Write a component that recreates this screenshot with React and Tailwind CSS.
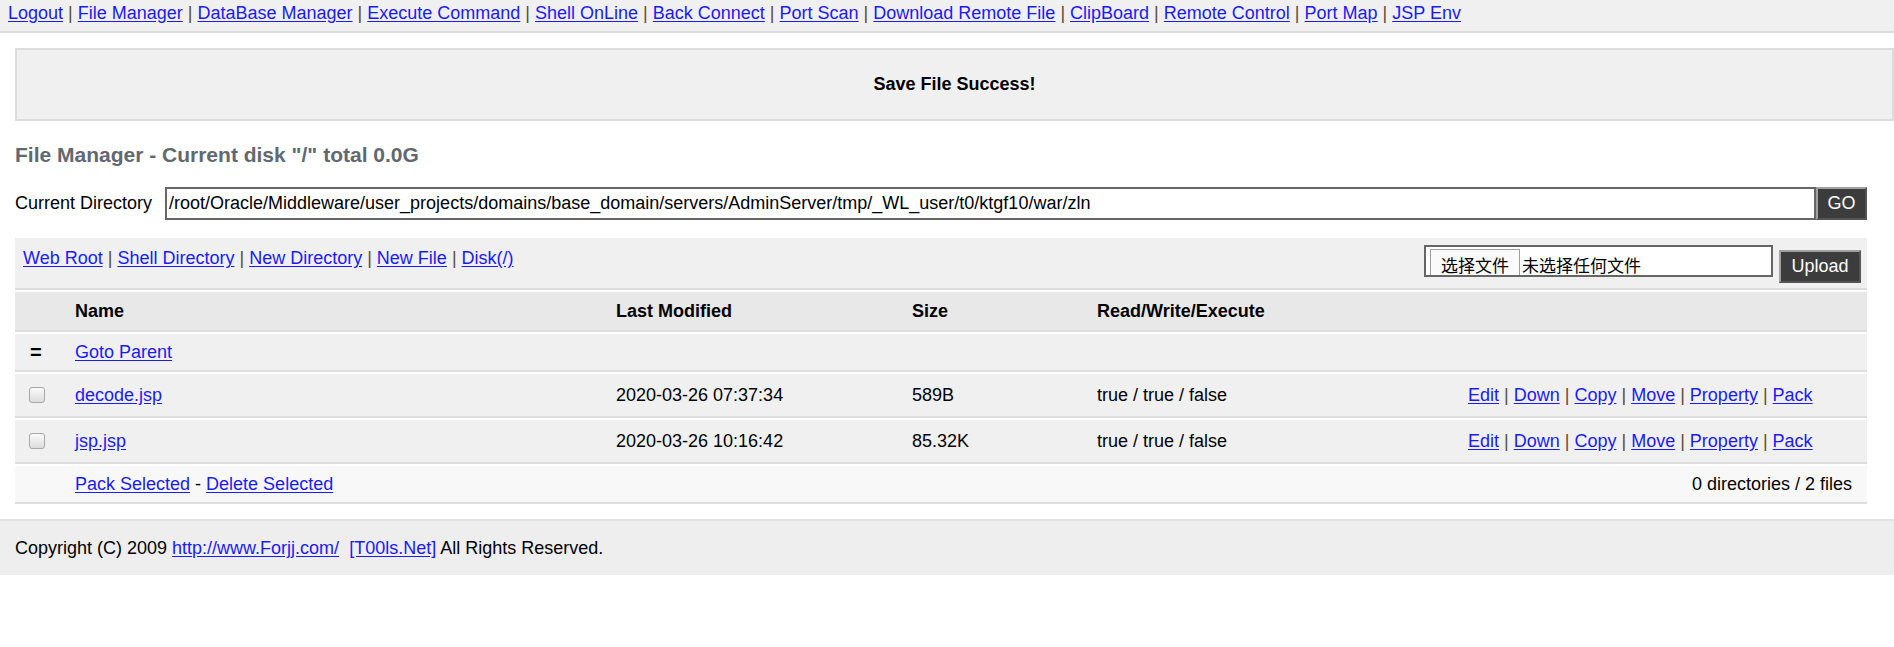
import React from 'react';

const navItems = [
  'Logout',
  'File Manager',
  'DataBase Manager',
  'Execute Command',
  'Shell OnLine',
  'Back Connect',
  'Port Scan',
  'Download Remote File',
  'ClipBoard',
  'Remote Control',
  'Port Map',
  'JSP Env',
];

const toolItems = ['Web Root', 'Shell Directory', 'New Directory', 'New File', 'Disk(/)'];

const actions = ['Edit', 'Down', 'Copy', 'Move', 'Property', 'Pack'];

const files = [
  { name: 'decode.jsp', modified: '2020-03-26 07:37:34', size: '589B', rwe: 'true / true / false' },
  { name: 'jsp.jsp', modified: '2020-03-26 10:16:42', size: '85.32K', rwe: 'true / true / false' },
];

const cols = 'grid grid-cols-[60px_541px_296px_185px_371px_1fr] items-center';

function Link({ children }) {
  return <a href="#" className="text-[#1a1aff] underline underline-offset-2">{children}</a>;
}

function Piped({ items }) {
  return (
    <>
      {items.map((item, i) => (
        <React.Fragment key={item}>
          {i > 0 && <span className="text-[#5a4a3a]"> | </span>}
          <Link>{item}</Link>
        </React.Fragment>
      ))}
    </>
  );
}

function Checkbox() {
  return (
    <div className="w-4 h-4 rounded-[3px] border border-[#a8a8a8] bg-linear-to-b from-[#fafafa] to-[#dcdcdc]" />
  );
}

export default function App() {
  return (
    <div className="min-h-[647px] bg-white text-black text-[18px] leading-[21px] font-['Liberation_Sans',Arial,'Noto_Sans_CJK_SC',sans-serif] overflow-hidden">
      <div className="h-[33px] bg-[#f0f0f0] border-b-2 border-[#dddddd] pl-[8px] pt-[3px] whitespace-nowrap">
        <Piped items={navItems} />
      </div>

      <div className="ml-[15px] mt-[15px] h-[73px] border-2 border-[#dcdcdc] bg-[#f0f0f0] flex items-center justify-center font-bold">
        Save File Success!
      </div>

      <div className="w-[1852px] ml-[15px]">
        <h2 className="mt-[22px] text-[21px] leading-[24px] font-bold text-[#626870]">
          File Manager - Current disk &quot;/&quot; total 0.0G
        </h2>

        <div className="mt-[20px] flex items-center">
          <span className="w-[150px]">Current Directory</span>
          <div className="flex-1 h-[33px] border-2 border-[#666666] bg-white flex items-center pl-[2px]">
            /root/Oracle/Middleware/user_projects/domains/base_domain/servers/AdminServer/tmp/_WL_user/t0/ktgf10/war/zln
          </div>
          <button className="w-[51px] h-[33px] bg-[#3c3c3c] text-white border-2 border-t-[#a0a0a0] border-l-[#a0a0a0] border-r-[#555555] border-b-[#555555]">
            GO
          </button>
        </div>

        <div className="mt-[18px] flex flex-col gap-[2px]">
          <div className="h-[52px] bg-[#f0f0f0] border-b-2 border-[#dddddd] flex items-start justify-between pl-[8px] pr-[6px] pt-[7px]">
            <div className="pt-[3px] whitespace-nowrap">
              <Piped items={toolItems} />
            </div>
            <div className="flex items-start gap-[6px]">
              <div className="w-[349px] h-[32px] border-2 border-[#666666] bg-white flex items-end overflow-hidden pl-[4px]">
                <div className="h-[26px] pt-[4px] px-[10px] bg-[#fafafa] border-t border-l border-r border-[#a0a0a0] flex items-center font-['Noto_Sans_CJK_SC',sans-serif] text-[17px]">
                  选择文件
                </div>
                <div className="h-[26px] pt-[4px] pl-[2px] flex items-center font-['Noto_Sans_CJK_SC',sans-serif] text-[17px]">
                  未选择任何文件
                </div>
              </div>
              <button className="mt-[5px] w-[82px] h-[33px] bg-[#3c3c3c] text-white border-2 border-t-[#a0a0a0] border-l-[#a0a0a0] border-r-[#555555] border-b-[#555555]">
                Upload
              </button>
            </div>
          </div>

          <div className={`${cols} h-[40px] bg-[#e8e8e8] border-b-2 border-[#dddddd] font-bold`}>
            <span />
            <span>Name</span>
            <span>Last Modified</span>
            <span>Size</span>
            <span>Read/Write/Execute</span>
            <span />
          </div>

          <div className={`${cols} h-[38px] bg-[#f0f0f0] border-b-2 border-[#dddddd]`}>
            <span className="pl-[15px] font-bold text-[20px]">=</span>
            <span><Link>Goto Parent</Link></span>
          </div>

          {files.map((f) => (
            <div key={f.name} className={`${cols} h-[44px] bg-[#f0f0f0] border-b-2 border-[#dddddd]`}>
              <span className="pl-[14px]"><Checkbox /></span>
              <span><Link>{f.name}</Link></span>
              <span>{f.modified}</span>
              <span>{f.size}</span>
              <span>{f.rwe}</span>
              <span className="whitespace-nowrap"><Piped items={actions} /></span>
            </div>
          ))}

          <div className="h-[38px] bg-[#f8f8f8] border-b-2 border-[#dddddd] flex items-center justify-between pl-[60px] pr-[15px]">
            <span>
              <Link>Pack Selected</Link> - <Link>Delete Selected</Link>
            </span>
            <span>0 directories / 2 files</span>
          </div>
        </div>
      </div>

      <div className="mt-[15px] h-[56px] bg-[#eeeeee] border-t-2 border-[#e2e2e2] flex items-center pl-[15px]">
        <span>
          Copyright (C) 2009 <Link>http://www.Forjj.com/</Link>&nbsp;&nbsp;<Link>[T00ls.Net]</Link> All Rights Reserved.
        </span>
      </div>
    </div>
  );
}
